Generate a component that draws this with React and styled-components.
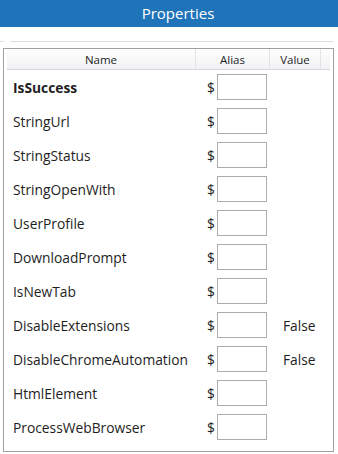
import React from 'react';
import styled, { createGlobalStyle } from 'styled-components';

const GlobalStyle = createGlobalStyle`
  html, body {
    margin: 0;
    padding: 0;
    background: #ffffff;
  }
  body {
    font-family: "Segoe UI", "Open Sans", "Noto Sans", sans-serif;
    color: #1e1e1e;
  }
`;

const Page = styled.div`
  width: 338px;
  height: 454px;
  overflow: hidden;
  background: #ffffff;
`;

const TitleBar = styled.div`
  height: 27px;
  background: #1f74b9;
  color: #ffffff;
  display: flex;
  align-items: center;
  justify-content: center;
  padding-left: 18px;
  font-size: 15px;
  line-height: 27px;
`;

const Separator = styled.div`
  display: flex;
  gap: 6px;
  margin-top: 14px;
  height: 1px;
`;

const SepLine = styled.div`
  height: 1px;
  background: #d9dee4;
  width: ${({ $w }) => ($w ? `${$w}px` : 'auto')};
  flex: ${({ $w }) => ($w ? 'none' : '1')};
  margin-right: ${({ $mr }) => $mr || 0}px;
`;

const Panel = styled.div`
  margin: 6px 4px 0 3px;
  border: 1px solid #a0a0a0;
  height: 404px;
  box-sizing: border-box;
  padding: 0 3px 0 3px;
`;

const Grid = styled.div`
  display: grid;
  grid-template-columns: 189px 74px 51px 9px;
`;

const HeadCell = styled.div`
  height: 21px;
  box-sizing: border-box;
  background: linear-gradient(#ffffff, #f1f2f4);
  border-bottom: 1px solid #d5d7da;
  border-right: ${({ $last }) => ($last ? 'none' : '1px solid #e2e3e5')};
  font-size: 11.5px;
  display: flex;
  align-items: center;
  justify-content: center;
  color: #1e1e1e;
`;

const Row = styled.div`
  display: contents;
`;

const NameCell = styled.div`
  height: 34px;
  display: flex;
  align-items: center;
  padding-left: 6px;
  font-size: 13.8px;
  font-weight: ${({ $bold }) => ($bold ? 700 : 400)};
  white-space: nowrap;
`;

const AliasCell = styled.div`
  height: 34px;
  display: flex;
  align-items: center;
  padding-left: 11px;
  font-size: 13.8px;
`;

const Dollar = styled.span`
  width: 10px;
`;

const AliasBox = styled.div`
  width: 50px;
  height: 26px;
  box-sizing: border-box;
  border: 1px solid #acacac;
  background: #ffffff;
`;

const ValueCell = styled.div`
  height: 34px;
  display: flex;
  align-items: center;
  padding-left: 13px;
  font-size: 13.8px;
`;

const Filler = styled.div`
  height: 34px;
`;

const props = [
  { name: 'IsSuccess', bold: true },
  { name: 'StringUrl' },
  { name: 'StringStatus' },
  { name: 'StringOpenWith' },
  { name: 'UserProfile' },
  { name: 'DownloadPrompt' },
  { name: 'IsNewTab' },
  { name: 'DisableExtensions', value: 'False' },
  { name: 'DisableChromeAutomation', value: 'False' },
  { name: 'HtmlElement' },
  { name: 'ProcessWebBrowser' },
];

export default function App() {
  return (
    <Page>
      <GlobalStyle />
      <TitleBar>Properties</TitleBar>
      <Separator>
        <SepLine $w={4} />
        <SepLine $mr={5} />
      </Separator>
      <Panel>
        <Grid>
          <HeadCell>Name</HeadCell>
          <HeadCell>Alias</HeadCell>
          <HeadCell>Value</HeadCell>
          <HeadCell $last />
          {props.map((p) => (
            <Row key={p.name}>
              <NameCell $bold={p.bold}>{p.name}</NameCell>
              <AliasCell>
                <Dollar>$</Dollar>
                <AliasBox />
              </AliasCell>
              <ValueCell>{p.value || ''}</ValueCell>
              <Filler />
            </Row>
          ))}
        </Grid>
      </Panel>
    </Page>
  );
}
